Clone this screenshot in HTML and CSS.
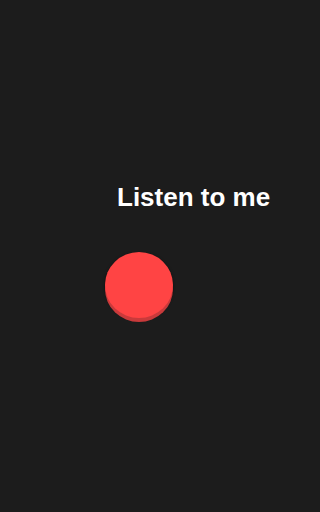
FILE: index.html
```
<!DOCTYPE html>
<html>
<head>
<meta charset="utf-8">
<link rel="stylesheet" href="styles.css">
</head>
<body>
<main class="screen">
  <h1 class="title">Listen to me</h1>
  <button class="record" aria-label="Record"></button>
</main>
</body>
</html>
```
FILE: styles.css
```
html, body {
  margin: 0;
  padding: 0;
  background: #1c1c1c;
}
.screen {
  width: 288px;
  height: 512px;
  display: flex;
  flex-direction: column;
  align-items: flex-start;
  padding-top: 182px;
  box-sizing: border-box;
  overflow: hidden;
}
.title {
  margin: 0 0 0 117px;
  font-family: "Liberation Sans", Arial, sans-serif;
  font-weight: 700;
  font-size: 26px;
  line-height: 30px;
  color: #ffffff;
  white-space: nowrap;
}
.record {
  margin: 40px 0 0 105px;
  width: 68px;
  height: 66px;
  border: none;
  padding: 0;
  border-radius: 50%;
  background: #ff4444;
  box-shadow: 0 4px 0 #c93a3b, 0 1px 3px rgba(0,0,0,0.6);
}
```
